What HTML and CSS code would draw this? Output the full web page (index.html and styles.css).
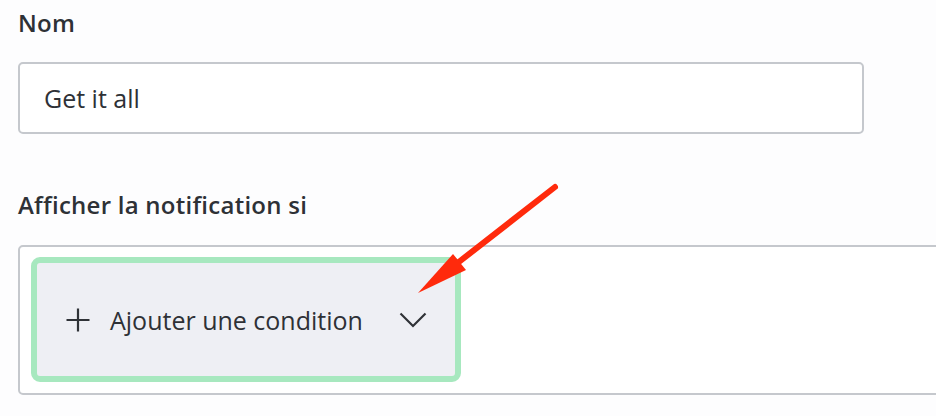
FILE: index.html
```html
<!DOCTYPE html>
<html lang="fr">
<head>
<meta charset="utf-8">
<link rel="stylesheet" href="styles.css">
</head>
<body>
<div class="form">
  <div class="field">
    <label class="label">Nom</label>
    <div class="input">Get it all</div>
  </div>
  <div class="field field-cond">
    <label class="label">Afficher la notification si</label>
    <div class="cond-box">
      <div class="add-cond">
        <svg class="plus" width="24" height="24" viewBox="0 0 24 24"><path d="M12 0.5v23M0.5 12h23" stroke="#2f3237" stroke-width="2.2" fill="none"/></svg>
        <span class="add-text">Ajouter une condition</span>
        <svg class="chev" width="28" height="18" viewBox="0 0 28 18"><path d="M1.5 2.5L14 15L26.5 2.5" stroke="#2f3237" stroke-width="2.2" fill="none"/></svg>
      </div>
    </div>
  </div>
</div>
<svg class="arrow" width="936" height="416" viewBox="0 0 936 416">
  <line x1="555" y1="187" x2="446" y2="272" stroke="#ff2a0c" stroke-width="6" stroke-linecap="round"/>
  <polygon points="418,293 453,254 466,270" fill="#ff2a0c"/>
</svg>
</body>
</html>
```
FILE: styles.css
```css
html, body {
  margin: 0;
  padding: 0;
  background: #fdfdfe;
}
body {
  font-family: "Open Sans", Lato, sans-serif;
  color: #2e3136;
  position: relative;
  width: 936px;
  height: 416px;
  overflow: hidden;
}
.form {
  padding: 8px 0 0 18px;
  display: flex;
  flex-direction: column;
}
.field {
  display: flex;
  flex-direction: column;
}
.label {
  font-size: 24px;
  font-weight: 600;
  letter-spacing: 0.25px;
  line-height: 30px;
  color: #2e3136;
}
.input {
  margin-top: 24px;
  width: 846px;
  height: 72px;
  box-sizing: border-box;
  border: 2px solid #c5c8cd;
  border-radius: 5px;
  padding-left: 24px;
  display: flex;
  align-items: center;
  font-size: 25px;
  background: #fff;
}
.field-cond {
  margin-top: 56px;
}
.cond-box {
  margin-top: 25px;
  width: 940px;
  height: 150px;
  box-sizing: border-box;
  border: 2px solid #c5c8cd;
  border-radius: 5px;
  padding: 10px 0 0 11px;
  background: #fff;
}
.add-cond {
  width: 430px;
  height: 125px;
  box-sizing: border-box;
  border: 6px solid #a7e8bf;
  border-radius: 9px;
  background: #eeeff4;
  display: flex;
  align-items: center;
  padding: 0 0 0 29px;
}
.add-text {
  margin-left: 20px;
  font-size: 25px;
  color: #2e3136;
}
.chev {
  margin-left: 36px;
}
.arrow {
  position: absolute;
  left: 0;
  top: 0;
  pointer-events: none;
}
```
